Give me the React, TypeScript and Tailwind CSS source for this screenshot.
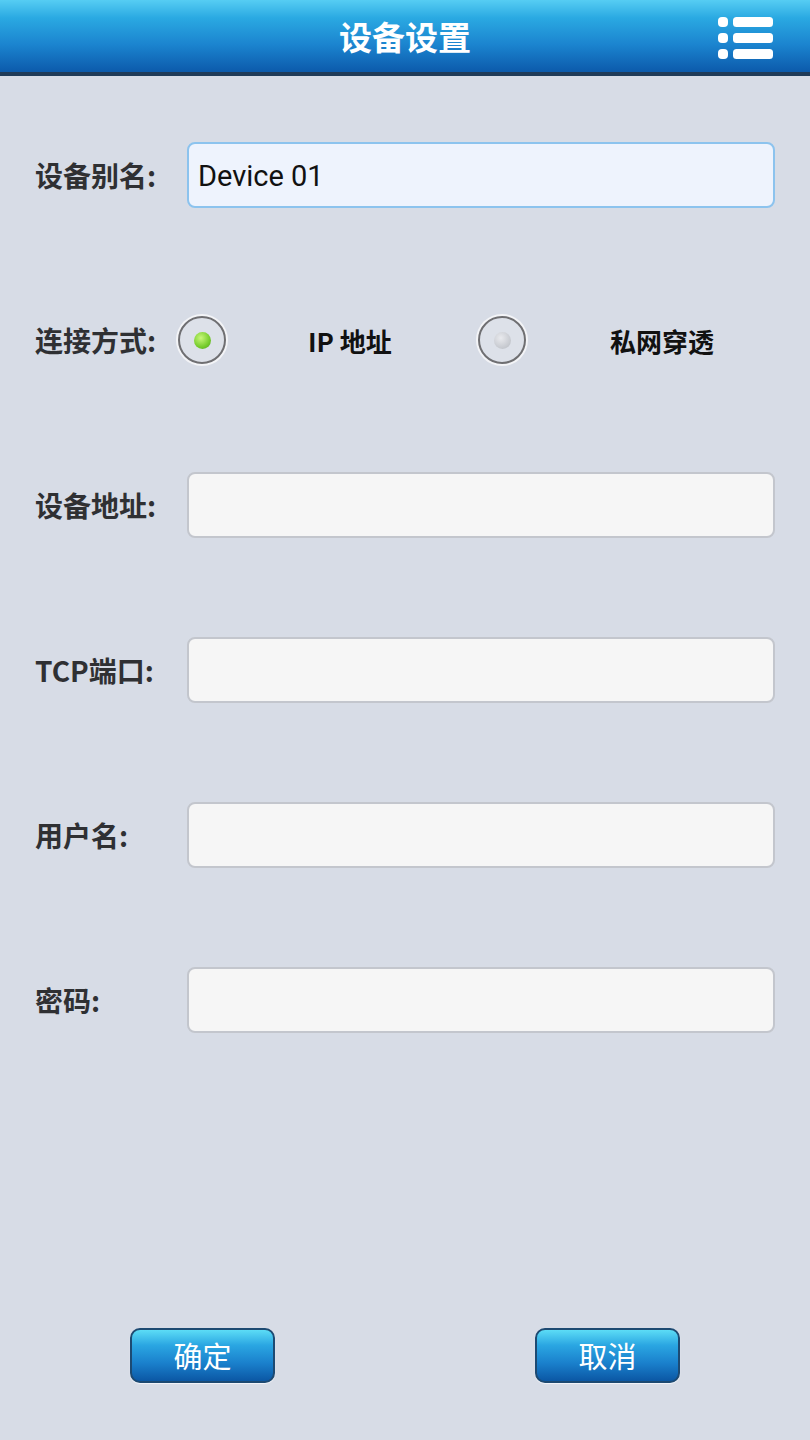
import React from "react";

const font = { fontFamily: '"Noto Sans CJK SC", "Noto Sans", sans-serif' };

const fields = [
  { label: "设备地址:", value: "" },
  { label: "TCP端口:", value: "" },
  { label: "用户名:", value: "" },
  { label: "密码:", value: "" },
];

function MenuIcon() {
  return (
    <svg width="58" height="46" viewBox="0 0 58 46">
      {[0, 16, 32].map((y) => (
        <g key={y} fill="#fff">
          <rect x="1" y={y + 2} width="10" height="10" rx="4" />
          <rect x="16" y={y + 2} width="40" height="10" rx="3.5" />
        </g>
      ))}
    </svg>
  );
}

function Radio({ checked }: { checked: boolean }) {
  return (
    <div className="w-[48px] h-[48px] rounded-full border-[2px] border-[#6f6f72] bg-[#dde1e9] shadow-[0_0_0_2px_#f3f4f7] flex items-center justify-center">
      {checked ? (
        <div className="w-[17px] h-[17px] rounded-full bg-[radial-gradient(circle_at_40%_35%,#c9f77a,#76cc2c_60%,#4f9d1f)]" />
      ) : (
        <div className="w-[17px] h-[17px] rounded-full bg-[radial-gradient(circle_at_40%_35%,#e9eaee,#c5c8ce_70%,#b3b6bd)]" />
      )}
    </div>
  );
}

function Field({ label, value, active }: { label: string; value: string; active?: boolean }) {
  return (
    <div className="flex items-center h-[66px]">
      <div className="w-[152px] text-[28px] font-bold text-[#2f3033]">{label}</div>
      <div
        className={
          active
            ? "w-[588px] h-[66px] rounded-[8px] border-[2px] border-[#8cc3ee] bg-[#eef3fd] flex items-center px-[9px] pt-[4px]"
            : "w-[588px] h-[66px] rounded-[8px] border-[2px] border-[#c3c6cd] bg-[#f6f6f6] flex items-center px-[9px] pt-[4px]"
        }
      >
        <span className="text-[29px] text-[#111]" style={{ fontFamily: 'Roboto, "Noto Sans CJK SC", sans-serif' }}>
          {value}
        </span>
      </div>
    </div>
  );
}

export default function App() {
  return (
    <div className="w-[810px] h-[1440px] bg-[#d7dce6] flex flex-col" style={font}>
      {/* Header */}
      <div className="h-[76px] border-b-[4px] border-[#203b58] bg-[linear-gradient(#56cdf3_0%,#2aa9e2_25%,#1b84cf_62%,#0c5aab_100%)] flex items-center relative">
        <div className="flex-1 text-center text-[33px] font-bold text-white pt-[2px]">设备设置</div>
        <div className="absolute right-[35px] top-[15px]">
          <MenuIcon />
        </div>
      </div>

      {/* Form */}
      <div className="pl-[35px] pt-[66px] flex flex-col gap-[99px]">
        <Field label="设备别名:" value="Device 01" active />

        <div className="flex items-center h-[66px]">
          <div className="w-[143px] text-[28px] font-bold text-[#2f3033]">连接方式:</div>
          <Radio checked />
          <span className="ml-[82px] w-[170px] text-[26px] font-bold text-[#111]">IP 地址</span>
          <Radio checked={false} />
          <span className="ml-[84px] text-[26px] font-bold text-[#111]">私网穿透</span>
        </div>

        {fields.map((f) => (
          <Field key={f.label} label={f.label} value={f.value} />
        ))}
      </div>

      {/* Buttons */}
      <div className="mt-[295px] flex pl-[130px] gap-[260px]">
        {["确定", "取消"].map((t) => (
          <button
            key={t}
            className="w-[145px] h-[55px] rounded-[10px] border-[2px] border-[#1d4a72] bg-[linear-gradient(#5cdcf6_0%,#2aa6e2_30%,#1a80cc_65%,#0b57a4_100%)] text-[29px] text-white shadow-[0_1px_1px_#f4f6fa]"
          >
            {t}
          </button>
        ))}
      </div>
    </div>
  );
}
